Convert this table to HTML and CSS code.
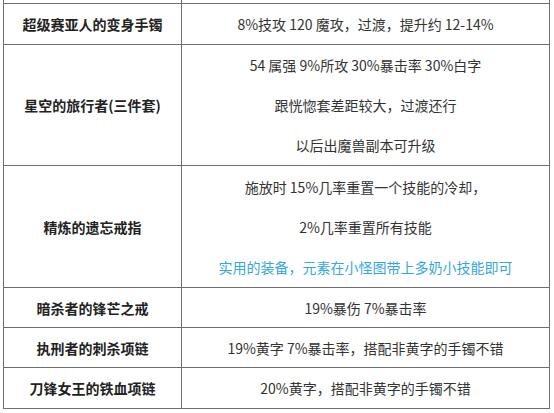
FILE: index.html
```html
<!DOCTYPE html>
<html lang="zh-CN">
<head>
<meta charset="utf-8">
<title>装备推荐</title>
<link rel="stylesheet" href="styles.css">
</head>
<body>
<table class="gear">
  <colgroup><col class="c-name"><col class="c-desc"></colgroup>
  <tr class="cut"><td></td><td></td></tr>
  <tr class="r41"><th>超级赛亚人的变身手镯</th><td>8%技攻 120 魔攻，过渡，提升约 12-14%</td></tr>
  <tr class="r121"><th>星空的旅行者(三件套)</th><td><p>54 属强 9%所攻 30%暴击率 30%白字</p><p>跟恍惚套差距较大，过渡还行</p><p>以后出魔兽副本可升级</p></td></tr>
  <tr class="r122"><th>精炼的遗忘戒指</th><td><p>施放时 15%几率重置一个技能的冷却，</p><p>2%几率重置所有技能</p><p class="tip">实用的装备，元素在小怪图带上多奶小技能即可</p></td></tr>
  <tr class="r40"><th>暗杀者的锋芒之戒</th><td>19%暴伤 7%暴击率</td></tr>
  <tr class="r40"><th>执刑者的刺杀项链</th><td>19%黄字 7%暴击率，搭配非黄字的手镯不错</td></tr>
  <tr class="r41"><th>刀锋女王的铁血项链</th><td>20%黄字，搭配非黄字的手镯不错</td></tr>
</table>
</body>
</html>
```
FILE: styles.css
```css
html, body {
  margin: 0;
  padding: 0;
  background: #fff;
}
body {
  padding-left: 3px;
  font-family: "Noto Sans CJK SC", "Microsoft YaHei", sans-serif;
  font-size: 14px;
  color: #333;
}
.gear {
  border-collapse: collapse;
  width: 547px;
  table-layout: fixed;
}
.c-name { width: 178px; }
.gear th, .gear td {
  border: 1px solid #6f6f6f;
  padding: 0;
  text-align: center;
  vertical-align: middle;
  line-height: 20px;
}
.gear th {
  font-weight: bold;
  color: #222;
}
.gear .cut td {
  border-top: none;
  height: 3px;
}
.gear p {
  margin: 0;
  line-height: 40px;
}
.gear .tip {
  color: #35a6de;
}
.r41 th, .r41 td { height: 40px; }
.r40 th, .r40 td { height: 39px; }
.r121 th, .r121 td { height: 120px; }
.r122 th, .r122 td { height: 121px; }
.r122 p:first-child { padding-top: 1px; }
```
